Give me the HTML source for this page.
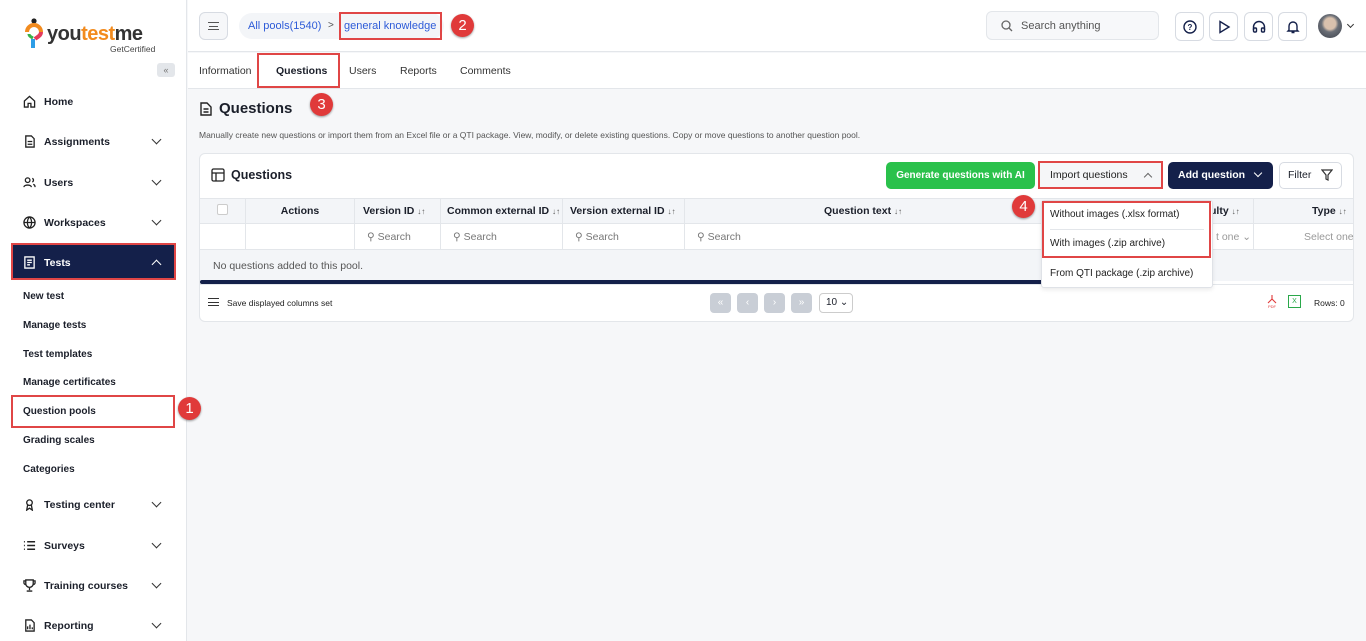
<!DOCTYPE html>
<html><head><meta charset="utf-8"><style>
*{box-sizing:border-box;margin:0;padding:0}
body{width:1366px;height:641px;overflow:hidden;font-family:"Liberation Sans",sans-serif;background:#f6f7f9;position:relative;color:#1b1f2a}
.a{position:absolute;white-space:nowrap}
.side{left:0;top:0;width:187px;height:641px;background:#fff;border-right:1px solid #e3e6ea}
.nav{position:absolute;left:23px;font-size:10.5px;font-weight:bold;color:#1b1f2a;display:flex;align-items:center;white-space:nowrap}
.nav svg{margin-right:8px}
.chev{position:absolute;left:153px;width:7px;height:7px;border-right:1.6px solid #333;border-bottom:1.6px solid #333;transform:rotate(45deg)}
.sub{position:absolute;left:23px;font-size:10px;font-weight:bold;color:#1b1f2a;white-space:nowrap}
.red{border:2px solid #e04646}
.num{position:absolute;width:23px;height:23px;border-radius:50%;background:#e03a3a;color:#fff;font-size:15px;text-align:center;line-height:23px;box-shadow:0 1px 2px rgba(0,0,0,.4)}
.ib{position:absolute;top:12px;width:29px;height:29px;border:1px solid #d7dbe2;border-radius:6px;background:#fff;display:flex;align-items:center;justify-content:center}
.th{position:absolute;top:198px;height:26px;font-size:10.5px;font-weight:bold;line-height:26px;border-right:1px solid #e3e6ea;white-space:nowrap;overflow:hidden}
.srch{position:absolute;top:224px;height:26px;font-size:10.5px;color:#777;line-height:26px;border-right:1px solid #e3e6ea;padding-left:12px;white-space:nowrap;overflow:hidden}
.pg{position:absolute;top:293px;width:21px;height:20px;background:#c9ced6;border-radius:4px;color:#fff;font-size:10px;text-align:center;line-height:20px}
.ar{font-size:8px;color:#555;font-weight:normal}
</style></head><body>
<div class="a side"></div>
<svg class="a" style="left:24px;top:18px" width="20" height="32" viewBox="0 0 20 32"><circle cx="10" cy="3" r="2.6" fill="#222"/><path d="M3 14a7 7 0 0 1 14 0" stroke="#f28b1e" stroke-width="4" fill="none"/><path d="M17 14c0 4-4 5-6 7" stroke="#e43b5c" stroke-width="4" fill="none"/><path d="M5 16c0 2 2 3 4 4" stroke="#36b24a" stroke-width="3" fill="none"/><path d="M9 21v9" stroke="#2d9de6" stroke-width="4"/></svg>
<div class="a" style="left:47px;top:23px;font-size:20px;font-weight:bold;color:#333;letter-spacing:-0.5px">you<span style="color:#f28b1e">test</span>me</div>
<div class="a" style="left:110px;top:44px;font-size:8.5px;color:#444">GetCertified</div>
<div class="a" style="left:157px;top:63px;width:18px;height:14px;background:#e3e6ea;border-radius:3px;font-size:9px;color:#777;text-align:center;line-height:14px">«</div>

<div class="nav" style="top:95px"><svg width="13" height="13" viewBox="0 0 14 14" fill="none" stroke="#222" stroke-width="1.4"><path d="M1.5 6.5 7 1.5l5.5 5V13h-4V9h-3v4h-4z"/></svg>Home</div>
<div class="nav" style="top:135px"><svg width="13" height="13" viewBox="0 0 14 14" fill="none" stroke="#222" stroke-width="1.4"><path d="M3 1h6l3 3v9H3z"/><path d="M5 7h5M5 10h5"/></svg>Assignments</div><div class="chev" style="top:136px"></div>
<div class="nav" style="top:176px"><svg width="13" height="13" viewBox="0 0 14 14" fill="none" stroke="#222" stroke-width="1.4"><circle cx="5" cy="4.5" r="2.5"/><path d="M1 12c0-3 8-3 8 0M10 2.5a2.2 2.2 0 0 1 0 4M11 9c2 .5 2 2 2 3"/></svg>Users</div><div class="chev" style="top:177px"></div>
<div class="nav" style="top:216px"><svg width="13" height="13" viewBox="0 0 14 14" fill="none" stroke="#222" stroke-width="1.4"><circle cx="7" cy="7" r="6"/><path d="M1 7h12M7 1c-3 3-3 9 0 12M7 1c3 3 3 9 0 12"/></svg>Workspaces</div><div class="chev" style="top:217px"></div>
<div class="a red" style="left:11px;top:243px;width:165px;height:37px;background:#14204a"></div>
<div class="nav" style="top:256px;color:#fff"><svg width="13" height="13" viewBox="0 0 14 14" fill="none" stroke="#fff" stroke-width="1.4"><path d="M2 1h10v12H2z"/><path d="M4.5 4.5h5M4.5 7h5M4.5 9.5h3"/></svg>Tests</div><div class="chev" style="top:261px;border-color:#fff;transform:rotate(-135deg)"></div>
<div class="sub" style="top:291px">New test</div>
<div class="sub" style="top:320px">Manage tests</div>
<div class="sub" style="top:349px">Test templates</div>
<div class="sub" style="top:377px">Manage certificates</div>
<div class="a red" style="left:11px;top:395px;width:164px;height:33px"></div>
<div class="sub" style="top:406px">Question pools</div>
<div class="num" style="left:178px;top:397px">1</div>
<div class="sub" style="top:435px">Grading scales</div>
<div class="sub" style="top:464px">Categories</div>
<div class="nav" style="top:498px"><svg width="13" height="13" viewBox="0 0 14 14" fill="none" stroke="#222" stroke-width="1.4"><circle cx="7" cy="5" r="3"/><path d="M5 7.5 4 13l3-2 3 2-1-5.5"/></svg>Testing center</div><div class="chev" style="top:499px"></div>
<div class="nav" style="top:539px"><svg width="13" height="13" viewBox="0 0 14 14" fill="none" stroke="#222" stroke-width="1.6"><path d="M1 3h1M1 7h1M1 11h1M4.5 3H13M4.5 7H13M4.5 11H13"/></svg>Surveys</div><div class="chev" style="top:540px"></div>
<div class="nav" style="top:579px"><svg width="13" height="13" viewBox="0 0 14 14" fill="none" stroke="#222" stroke-width="1.4"><path d="M3 1h8v4a4 4 0 0 1-8 0zM3 2H1v2a2 2 0 0 0 2 2M11 2h2v2a2 2 0 0 1-2 2M7 9v3M4 13h6"/></svg>Training courses</div><div class="chev" style="top:580px"></div>
<div class="nav" style="top:619px"><svg width="13" height="13" viewBox="0 0 14 14" fill="none" stroke="#222" stroke-width="1.4"><path d="M3 1h6l3 3v9H3z"/><path d="M5 11V8M7.5 11V6M10 11V9"/></svg>Reporting</div><div class="chev" style="top:620px"></div>

<div class="a" style="left:188px;top:0;width:1178px;height:52px;background:#fff;border-bottom:1px solid #e3e6ea"></div>
<div class="a" style="left:199px;top:12px;width:29px;height:28px;border:1px solid #d7dbe2;border-radius:6px;background:#f6f7f9"><div class="a" style="left:8px;top:9px;width:11px;border-top:1.5px solid #555;height:8px;border-bottom:1.5px solid #555"></div><div class="a" style="left:9px;top:12.5px;width:9px;border-top:1.5px solid #555"></div></div>
<div class="a" style="left:239px;top:13px;width:205px;height:26px;border-radius:13px;background:#f3f5f8"></div>
<div class="a" style="left:248px;top:20px;font-size:11px;color:#2d5bd8">All pools(1540)</div>
<div class="a" style="left:328px;top:20px;font-size:10px;color:#555">&gt;</div>
<div class="a red" style="left:339px;top:12px;width:103px;height:28px"></div>
<div class="a" style="left:344px;top:20px;font-size:11px;color:#2d5bd8">general knowledge</div>
<div class="num" style="left:451px;top:14px">2</div>
<div class="a" style="left:986px;top:11px;width:173px;height:29px;border:1px solid #e3e6ea;border-radius:6px;background:#f7f8fa"></div>
<svg class="a" style="left:1001px;top:20px" width="12" height="12" viewBox="0 0 12 12" fill="none" stroke="#666" stroke-width="1.3"><circle cx="5" cy="5" r="4"/><path d="M8 8l3 3"/></svg>
<div class="a" style="left:1021px;top:20px;font-size:11px;color:#555">Search anything</div>
<div class="ib" style="left:1175px"><svg width="14" height="14" viewBox="0 0 14 14" fill="none" stroke="#14204a" stroke-width="1.4"><circle cx="7" cy="7" r="6"/><text x="7" y="10" font-size="8" text-anchor="middle" fill="#14204a" stroke="none" font-weight="bold">?</text></svg></div>
<div class="ib" style="left:1209px"><svg width="14" height="14" viewBox="0 0 14 14" fill="none" stroke="#14204a" stroke-width="1.4"><path d="M3 1.5 12 7l-9 5.5z"/></svg></div>
<div class="ib" style="left:1244px"><svg width="14" height="14" viewBox="0 0 14 14" fill="none" stroke="#14204a" stroke-width="1.4"><path d="M1.5 10V7a5.5 5.5 0 0 1 11 0v3"/><rect x="1.5" y="8" width="3" height="4" rx="1"/><rect x="9.5" y="8" width="3" height="4" rx="1"/></svg></div>
<div class="ib" style="left:1278px"><svg width="14" height="14" viewBox="0 0 14 14" fill="none" stroke="#14204a" stroke-width="1.4"><path d="M3 10V6a4 4 0 0 1 8 0v4l1 1H2zM5.5 12.5h3"/></svg></div>
<div class="a" style="left:1318px;top:14px;width:24px;height:24px;border-radius:50%;background:radial-gradient(circle at 50% 40%,#d9c1ad 0 30%,#6b6f77 45%,#3a3f4a 100%)"></div>
<div class="a" style="left:1348px;top:22px;width:5px;height:5px;border-right:1.3px solid #333;border-bottom:1.3px solid #333;transform:rotate(45deg)"></div>

<div class="a" style="left:188px;top:53px;width:1178px;height:36px;background:#fff;border-bottom:1px solid #e3e6ea"></div>
<div class="a" style="left:199px;top:65px;font-size:10.5px;color:#333">Information</div>
<div class="a red" style="left:257px;top:53px;width:83px;height:35px"></div>
<div class="a" style="left:276px;top:65px;font-size:10.5px;font-weight:bold">Questions</div>
<div class="a" style="left:349px;top:65px;font-size:10.5px;color:#333">Users</div>
<div class="a" style="left:400px;top:65px;font-size:10.5px;color:#333">Reports</div>
<div class="a" style="left:460px;top:65px;font-size:10.5px;color:#333">Comments</div>

<svg class="a" style="left:200px;top:102px" width="12" height="14" viewBox="0 0 12 14" fill="none" stroke="#222" stroke-width="1.4"><path d="M1 1h6l4 4v8H1z"/><path d="M3.5 7h5M3.5 10h5"/></svg>
<div class="a" style="left:219px;top:100px;font-size:15px;font-weight:bold">Questions</div>
<div class="num" style="left:310px;top:93px">3</div>
<div class="a" style="left:199px;top:130px;font-size:8.5px;color:#555">Manually create new questions or import them from an Excel file or a QTI package. View, modify, or delete existing questions. Copy or move questions to another question pool.</div>

<div class="a" style="left:199px;top:153px;width:1155px;height:169px;background:#fff;border:1px solid #e3e6ea;border-radius:6px"></div>
<svg class="a" style="left:211px;top:168px" width="14" height="14" viewBox="0 0 14 14" fill="none" stroke="#222" stroke-width="1.3"><rect x="1" y="1" width="12" height="12" rx="1.5"/><path d="M1 5h12M5 5v8"/></svg>
<div class="a" style="left:231px;top:168px;font-size:12.5px;font-weight:bold">Questions</div>
<div class="a" style="left:886px;top:162px;width:149px;height:27px;background:#2ac14b;border-radius:5px;color:#fff;font-size:10px;font-weight:bold;text-align:center;line-height:27px">Generate questions with AI</div>
<div class="a red" style="left:1038px;top:161px;width:125px;height:28px;background:#f5f6f8"></div>
<div class="a" style="left:1050px;top:169px;font-size:10.5px;color:#222">Import questions</div>
<div class="a" style="left:1145px;top:174px;width:6px;height:6px;border-left:1.4px solid #666;border-top:1.4px solid #666;transform:rotate(45deg)"></div>
<div class="a" style="left:1168px;top:162px;width:105px;height:27px;background:#14204a;border-radius:5px"></div>
<div class="a" style="left:1178px;top:169px;font-size:10.5px;color:#fff;font-weight:bold">Add question</div>
<div class="a" style="left:1255px;top:170px;width:6px;height:6px;border-right:1.5px solid #fff;border-bottom:1.5px solid #fff;transform:rotate(45deg)"></div>
<div class="a" style="left:1279px;top:162px;width:63px;height:27px;border:1px solid #d7dbe2;border-radius:5px"></div>
<div class="a" style="left:1288px;top:169px;font-size:10.5px">Filter</div>
<svg class="a" style="left:1321px;top:169px" width="12" height="12" viewBox="0 0 12 12" fill="none" stroke="#333" stroke-width="1.2"><path d="M1 1h10L7 6v5L5 10V6z"/></svg>

<div class="a" style="left:200px;top:198px;width:1153px;height:26px;background:#f3f5f8;border-top:1px solid #e3e6ea;border-bottom:1px solid #e3e6ea"></div>
<div class="th" style="left:200px;width:46px"><div class="a" style="left:17px;top:6px;width:11px;height:11px;border:1px solid #ccc;border-radius:2px;background:#fff"></div></div>
<div class="th" style="left:246px;width:109px;text-align:center">Actions</div>
<div class="th" style="left:355px;width:86px;padding-left:8px">Version ID <span class="ar">↓↑</span></div>
<div class="th" style="left:441px;width:122px;padding-left:6px">Common external ID <span class="ar">↓↑</span></div>
<div class="th" style="left:563px;width:122px;padding-left:7px">Version external ID <span class="ar">↓↑</span></div>
<div class="th" style="left:685px;width:569px;padding-left:139px">Question text <span class="ar">↓↑</span></div>
<div class="th" style="left:1200px;width:54px;padding-left:10px">ulty <span class="ar">↓↑</span></div>
<div class="th" style="left:1254px;width:99px;padding-left:58px;border:none">Type <span class="ar">↓↑</span></div>
<div class="a" style="left:200px;top:224px;width:1153px;height:26px;border-bottom:1px solid #e3e6ea"></div>
<div class="srch" style="left:200px;width:46px"></div><div class="srch" style="left:246px;width:109px"></div>
<div class="srch" style="left:355px;width:86px">⚲ Search</div>
<div class="srch" style="left:441px;width:122px">⚲ Search</div>
<div class="srch" style="left:563px;width:122px">⚲ Search</div>
<div class="srch" style="left:685px;width:569px">⚲ Search</div>
<div class="srch" style="left:1210px;width:44px;padding-left:6px;color:#999">t one ⌄</div>
<div class="srch" style="left:1254px;width:99px;padding-left:50px;color:#999;border:none;overflow:visible">Select one</div>
<div class="a" style="left:200px;top:250px;width:1153px;height:31px;background:#f3f5f8"></div>
<div class="a" style="left:213px;top:260px;font-size:10.5px;color:#555">No questions added to this pool.</div>
<div class="a" style="left:200px;top:280px;width:845px;height:4px;background:#14204a;border-radius:2px"></div>
<div class="a" style="left:200px;top:284px;width:1153px;border-top:1px solid #e3e6ea"></div>
<div class="a" style="left:208px;top:298px;width:11px;height:8px;border-top:1.3px solid #333;border-bottom:1.3px solid #333"></div><div class="a" style="left:208px;top:301.5px;width:11px;border-top:1.3px solid #333"></div>
<div class="a" style="left:227px;top:298px;font-size:8.5px;color:#222">Save displayed columns set</div>
<div class="pg" style="left:710px">«</div><div class="pg" style="left:737px">‹</div><div class="pg" style="left:764px">›</div><div class="pg" style="left:791px">»</div>
<div class="a" style="left:819px;top:293px;width:34px;height:20px;border:1px solid #ccc;border-radius:4px;font-size:10px;line-height:18px;padding-left:6px">10 ⌄</div>
<svg class="a" style="left:1266px;top:294px" width="12" height="15" viewBox="0 0 12 15" fill="none" stroke="#e03a3a" stroke-width="1.1"><path d="M6 1v4M6 5 2 9M6 5l4 4"/><text x="6" y="14" font-size="4" text-anchor="middle" fill="#e03a3a" stroke="none">PDF</text></svg>
<div class="a" style="left:1288px;top:295px;width:13px;height:13px;border:1px solid #2aa84a;font-size:7px;color:#2aa84a;text-align:center;line-height:11px">X</div>
<div class="a" style="left:1314px;top:298px;font-size:8.5px;color:#222">Rows: 0</div>

<div class="a" style="left:1041px;top:200px;width:172px;height:88px;background:#fff;border:1px solid #dfe2e7;border-radius:3px;box-shadow:0 2px 4px rgba(0,0,0,.08)"></div>
<div class="a red" style="left:1042px;top:201px;width:169px;height:57px"></div>
<div class="a" style="left:1050px;top:209px;font-size:10px;color:#222">Without images (.xlsx format)</div>
<div class="a" style="left:1050px;top:229px;width:154px;border-top:1px solid #e3e6ea"></div>
<div class="a" style="left:1050px;top:238px;font-size:10px;color:#222">With images (.zip archive)</div>
<div class="a" style="left:1050px;top:268px;font-size:10px;color:#222">From QTI package (.zip archive)</div>
<div class="num" style="left:1012px;top:195px">4</div>
</body></html>
